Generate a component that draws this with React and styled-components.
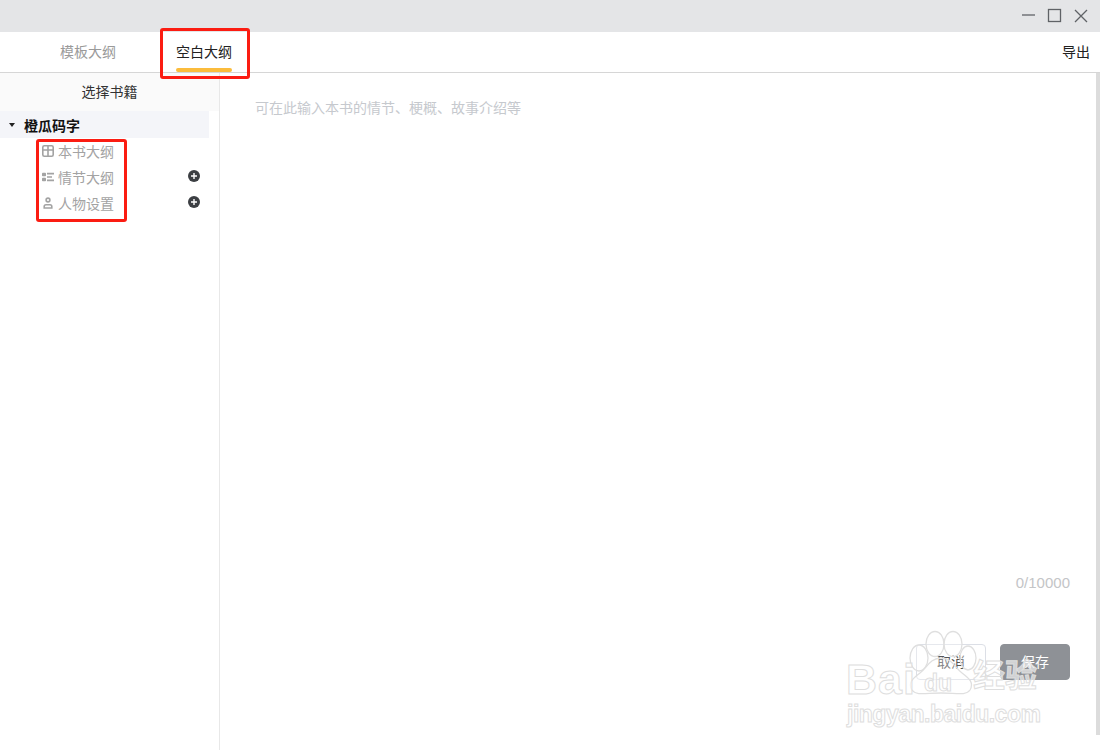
import React from "react";
import styled, { createGlobalStyle } from "styled-components";

const Global = createGlobalStyle`
  html, body { margin: 0; padding: 0; height: 100%; background: #fff; overflow: hidden; }
  #root { height: 100%; }
  * { box-sizing: border-box; }
  body { font-family: "Liberation Sans", "Noto Sans CJK SC", sans-serif; }
`;

const Page = styled.div`
  position: relative;
  width: 1100px;
  height: 750px;
  display: flex;
  flex-direction: column;
  overflow: hidden;
`;
const TitleBar = styled.div`
  height: 32px;
  background: #e4e5e7;
  display: flex;
  align-items: center;
  justify-content: flex-end;
  gap: 10px;
  padding-right: 11px;
`;
const WinButton = styled.svg`
  width: 16px;
  height: 16px;
  fill: none;
  stroke: #5f6266;
  stroke-width: 1.3;
`;
const TabBar = styled.div`
  height: 41px;
  border-bottom: 1px solid #d6d6d6;
  display: flex;
  align-items: stretch;
  padding-left: 60px;
  gap: 60px;
  position: relative;
`;
const Tab = styled.div`
  width: 56px;
  font-size: 14px;
  line-height: 40px;
  white-space: nowrap;
  color: ${p => (p.$active ? "#222" : "#9a9a9a")};
  position: relative;
  &::after {
    content: "";
    display: ${p => (p.$active ? "block" : "none")};
    position: absolute;
    left: 0;
    right: 0;
    bottom: 0;
    height: 4px;
    border-radius: 2px;
    background: #fbbc3c;
  }
`;
const Export = styled.div`
  margin-left: auto;
  margin-right: 10px;
  font-size: 14px;
  line-height: 40px;
  color: #222;
`;
const Main = styled.div`
  flex: 1;
  display: flex;
  min-height: 0;
`;
const Sidebar = styled.div`
  width: 220px;
  border-right: 1px solid #e8e8e8;
  display: flex;
  flex-direction: column;
`;
const SideHead = styled.div`
  height: 38px;
  background: #fafafa;
  text-align: center;
  font-size: 14px;
  line-height: 38px;
  color: #333;
`;
const BookRow = styled.div`
  width: 209px;
  height: 27px;
  padding-top: 1px;
  background: #f4f5f9;
  display: flex;
  align-items: center;
  padding-left: 9px;
  gap: 9px;
  font-size: 14px;
  font-weight: 700;
  color: #111;
`;
const Caret = styled.span`
  width: 0;
  height: 0;
  border-left: 3.5px solid transparent;
  border-right: 3.5px solid transparent;
  border-top: 4px solid #222;
`;
const Item = styled.div`
  height: 26px;
  display: flex;
  align-items: center;
  padding-left: 42px;
  gap: 4px;
  font-size: 14px;
  color: #a3a3a3;
  width: 209px;
`;
const ItemIcon = styled.svg`
  width: 12px;
  height: 12px;
  fill: none;
  stroke: #a3a3a3;
  stroke-width: 1.6;
  flex: none;
`;
const Plus = styled.svg`
  width: 12px;
  height: 12px;
  margin-left: auto;
  margin-right: 9px;
  margin-top: -3px;
`;
const Content = styled.div`
  flex: 1;
  display: flex;
  flex-direction: column;
  padding: 27px 26px 70px 35px;
  position: relative;
`;
const Placeholder = styled.div`
  font-size: 14px;
  line-height: 16px;
  color: #c6c9ce;
`;
const Counter = styled.div`
  margin-top: auto;
  text-align: right;
  font-size: 15px;
  color: #c4c5c7;
  line-height: 16px;
  margin-bottom: 53px;
`;
const Buttons = styled.div`
  display: flex;
  justify-content: flex-end;
  gap: 14px;
`;
const Button = styled.div`
  width: 70px;
  height: 36px;
  border-radius: 4px;
  font-size: 14px;
  line-height: 34px;
  text-align: center;
  border: 1px solid ${p => (p.$primary ? "#8e9196" : "#dcdfe6")};
  background: ${p => (p.$primary ? "#8e9196" : "#fff")};
  color: ${p => (p.$primary ? "#fff" : "#555")};
`;
const ScrollBar = styled.div`
  width: 4px;
  background: #dcdcdc;
  margin-bottom: 15px;
`;
const Highlight = styled.div`
  position: absolute;
  border: 3px solid #fb1c12;
  border-radius: 3px;
  left: ${p => p.$x}px;
  top: ${p => p.$y}px;
  width: ${p => p.$w}px;
  height: ${p => p.$h}px;
`;
const Watermark = styled.div`
  position: absolute;
  left: 843px;
  top: 630px;
  width: 200px;
  height: 96px;
  pointer-events: none;
`;
const Paw = styled.svg`
  position: absolute;
  left: 0;
  top: 0;
  width: 200px;
  height: 70px;
  fill: rgba(255,255,255,.3);
  stroke: #dfdfdf;
  stroke-width: 1.3;
`;
const Mark = styled.span`
  position: absolute;
  left: ${p => p.$x}px;
  top: ${p => p.$y}px;
  font-size: ${p => p.$s}px;
  font-weight: 700;
  line-height: 1;
  white-space: nowrap;
  letter-spacing: ${p => p.$ls || 0}px;
  color: rgba(255,255,255,.6);
  -webkit-text-stroke: 1px #dedede;
`;

const App = () => (
  <Page>
    <Global />
    <TitleBar>
      <WinButton viewBox="0 0 16 16"><path d="M1 7h13" /></WinButton>
      <WinButton viewBox="0 0 16 16"><rect x="1.5" y="1.5" width="12" height="12" /></WinButton>
      <WinButton viewBox="0 0 16 16"><path d="M2 2l12 12M14 2L2 14" /></WinButton>
    </TitleBar>
    <TabBar>
      <Tab>模板大纲</Tab>
      <Tab $active>空白大纲</Tab>
      <Export>导出</Export>
    </TabBar>
    <Main>
      <Sidebar>
        <SideHead>选择书籍</SideHead>
        <BookRow><Caret />橙瓜码字</BookRow>
        <Item>
          <ItemIcon viewBox="0 0 12 12">
            <rect x="0.8" y="0.8" width="10.4" height="10.4" rx="1.5" /><path d="M1 5h10M6 1v10" />
          </ItemIcon>
          本书大纲
        </Item>
        <Item>
          <ItemIcon viewBox="0 0 12 12">
            <rect x="0" y="1.8" width="4" height="3.4" rx="0.8" fill="#a3a3a3" stroke="none" /><rect x="0" y="6.8" width="4" height="3.4" rx="0.8" fill="#a3a3a3" stroke="none" />
            <path d="M5 2.6h7M5 6h5M5 9.4h7" />
          </ItemIcon>
          情节大纲
          <Plus viewBox="0 0 12 12">
            <circle cx="6" cy="6" r="6" fill="#3c3f43" /><path d="M3 6h6M6 3v6" stroke="#fff" strokeWidth="1.4" />
          </Plus>
        </Item>
        <Item>
          <ItemIcon viewBox="0 0 12 12">
            <circle cx="6" cy="3" r="1.9" /><path d="M2.2 11V9.6C2.2 8.5 3 7.8 4 7.8h4c1 0 1.8.7 1.8 1.8V11z" />
          </ItemIcon>
          人物设置
          <Plus viewBox="0 0 12 12">
            <circle cx="6" cy="6" r="6" fill="#3c3f43" /><path d="M3 6h6M6 3v6" stroke="#fff" strokeWidth="1.4" />
          </Plus>
        </Item>
      </Sidebar>
      <Content>
        <Placeholder>可在此输入本书的情节、梗概、故事介绍等</Placeholder>
        <Counter>0/10000</Counter>
        <Buttons>
          <Button>取消</Button>
          <Button $primary>保存</Button>
        </Buttons>
      </Content>
      <ScrollBar />
    </Main>
    <Highlight $x={160} $y={28} $w={90} $h={51} />
    <Highlight $x={36} $y={139} $w={91} $h={83} />
    <Watermark>
      <Paw viewBox="0 0 200 70">
        <ellipse cx="92" cy="14" rx="9" ry="12.5" />
        <ellipse cx="110" cy="14" rx="9" ry="12.5" />
        <ellipse cx="76" cy="28" rx="9" ry="13" />
        <ellipse cx="125" cy="28" rx="8" ry="12" />
        <path d="M98 28c-11 0-14 10-21 15-8 6-12 10-8 17 4 6 14 3 29 3s25 3 29-3c4-7 0-11-8-17-7-5-10-15-21-15z" />
      </Paw>
      <Mark $x={3} $y={28} $s={43} $ls={1}>Bai</Mark>
      <Mark $x={81} $y={42} $s={23}>du</Mark>
      <Mark $x={130} $y={30} $s={32}>经验</Mark>
      <Mark $x={4} $y={73} $s={23} $ls={-0.5}>jingyan.baidu.com</Mark>
    </Watermark>
  </Page>
);

export default App;
